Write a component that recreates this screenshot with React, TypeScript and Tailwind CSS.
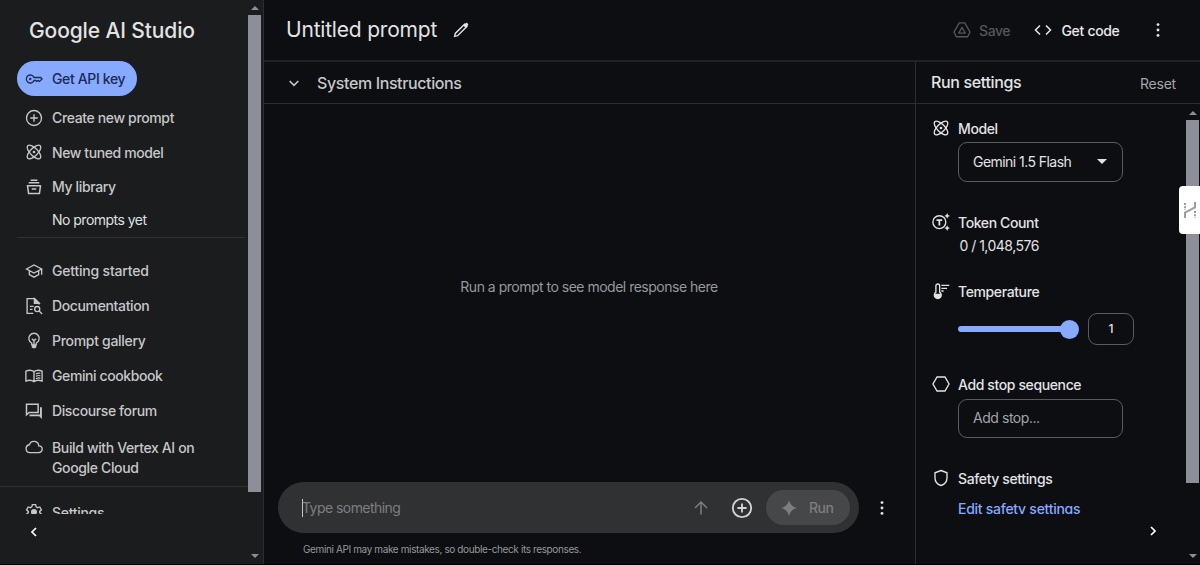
import type { ReactNode } from 'react';
import clsx from 'clsx';

type IconProps = { className?: string; strokeWidth?: number; children?: ReactNode };

function Icon({ className = 'size-[18px]', strokeWidth = 1.8, children }: IconProps) {
  return (
    <svg
      viewBox="0 0 24 24"
      className={clsx('shrink-0', className)}
      fill="none"
      stroke="currentColor"
      strokeWidth={strokeWidth}
    >
      {children}
    </svg>
  );
}

const KeyIcon = () => (
  <Icon strokeWidth={1.7}>
    <path d="M12 10a5.3 5.3 0 1 0 0 4h2.2l1.4 1.2 1.8-1.2 1.8 1.2 3.6-3.2-1.9-2z" />
    <circle cx="7" cy="12" r="1.6" fill="currentColor" stroke="none" />
  </Icon>
);

const PlusCircleIcon = ({ className, strokeWidth }: IconProps) => (
  <Icon className={className} strokeWidth={strokeWidth}>
    <circle cx="12" cy="12" r="10" />
    <path d="M12 7v10M7 12h10" />
  </Icon>
);

const ModelIcon = () => (
  <Icon>
    <ellipse cx="12" cy="12" rx="11.8" ry="5" transform="rotate(45 12 12)" />
    <ellipse cx="12" cy="12" rx="11.8" ry="5" transform="rotate(-45 12 12)" />
    <circle cx="12" cy="12" r="1.8" fill="currentColor" stroke="none" />
  </Icon>
);

const LibraryIcon = () => (
  <Icon strokeWidth={2}>
    <path d="M7.5 3h9M5 6.4h14M3.3 10.2h17.4l-1.5 10.6H4.8zM9 14.5h6" strokeLinejoin="round" />
  </Icon>
);

const SchoolIcon = () => (
  <Icon>
    <path d="M2 9.3 12 4l10.2 5.3L12 14.8zM5.8 11.6v5.2L12 20.2l6.2-3.4v-5.2M22.2 9.3v7.8" />
  </Icon>
);

const DocSearchIcon = () => (
  <Icon>
    <path d="M11 21.8H2.8V2.2h10l6 6V10M6.5 12.5h5M6.5 16.5H10" />
    <path d="M12.5 2.2v6.2h6.3z" fill="currentColor" />
    <circle cx="16.3" cy="16" r="3.4" />
    <path d="m18.8 18.6 4 4" />
  </Icon>
);

const BulbIcon = () => (
  <Icon>
    <path d="M9 17.2v-2.4a6.9 6.9 0 1 1 6 0v2.4zM9.2 9l2.8 2.8L14.8 9M12 11.8V17" />
    <path d="M9 17h6v4h-1.4a1.8 1.8 0 0 1-3.2 0H9z" fill="currentColor" stroke="none" />
    <path d="M9.5 20h5" />
  </Icon>
);

const BookIcon = () => (
  <Icon>
    <path d="M12 6.2C9 4 4.5 4 1.2 5.5v13.3c3.3-1.4 7.8-1.4 10.8.7 3-2.1 7.5-2.1 10.8-.7V5.5C19.5 4 15 4 12 6.2zM12 6.2v13.3" />
    <path d="M14.5 9.2q3-1.5 6-.8M14.5 12.4q3-1.5 6-.8M14.5 15.6q3-1.5 6-.8" strokeWidth="1.5" />
  </Icon>
);

const ForumIcon = () => (
  <Icon strokeWidth={2}>
    <path d="M2 3h15.500v11H5.500L2 17z" />
    <path d="M20 7h2.500v15.500L19 19H6v-2.500h14z" fill="currentColor" stroke="none" />
  </Icon>
);

const CloudIcon = () => (
  <Icon>
    <path d="M6.5 19.5a5.3 5.3 0 0 1-.7-10.5 6.4 6.4 0 0 1 12.5 1.5 4.500 4.500 0 0 1 .2 9z" />
  </Icon>
);

const SettingsIcon = () => (
  <Icon>
    <path d="M9.8 2.2h4.4l.7 3 1.8 1 3-.9 2.2 3.8-2.3 2.1v1.6l2.3 2.1-2.2 3.8-3-.9-1.8 1-.7 3H9.8l-.7-3-1.8-1-3 .9-2.2-3.8 2.3-2.1v-1.6L2.1 9.1l2.2-3.8 3 .9 1.800-1z" />
    <circle cx="12" cy="12" r="4" fill="currentColor" stroke="none" />
  </Icon>
);

const TokenIcon = () => (
  <Icon>
    <circle cx="9.8" cy="12.2" r="8.6" />
    <path d="M6 9.5h7.6M9.800 9.500v7" strokeWidth="2.4" />
    <path d="M16.5 0h8v8h-5.200z" fill="#0c0e12" stroke="none" />
    <path
      d="m20.2 0 1.200 2.700L24 3.900l-2.600 1.200-1.200 2.700L19 5.100l-2.600-1.200L19 2.700zM20.200 16.200l1.200 2.700 2.600 1.200-2.600 1.200-1.200 2.700-1.200-2.700-2.600-1.200 2.600-1.200z"
      fill="currentColor"
      stroke="none"
    />
  </Icon>
);

const ThermometerIcon = () => (
  <Icon>
    <path d="M5.2 13.5V5.200a2.500 2.500 0 0 1 5 0v8.300a4.600 4.600 0 1 1-5 0z" />
    <path d="M3 15.500h9.400v1.700a4.700 4.700 0 0 1-9.400 0z" fill="currentColor" stroke="none" />
    <path d="M12.500 4.500H23M12.500 8.500H20M12.500 12h3" />
  </Icon>
);

const HexagonIcon = () => (
  <Icon>
    <path d="M6.7 2.7h10.600L22.700 12l-5.400 9.300H6.700L1.300 12z" />
  </Icon>
);

const ShieldIcon = () => (
  <Icon>
    <path d="m12 2 8 3v6.500c0 5-3.300 9-8 10.500-4.700-1.500-8-5.500-8-10.500V5z" />
  </Icon>
);

const DriveIcon = () => (
  <Icon strokeWidth={1.7}>
    <path d="M8.3 2.500h7.400l7 12.300-3.200 6.200H4.500l-3.200-6.200z" strokeLinejoin="round" />
    <path d="m12 8.500 4.400 7.800H7.600z" strokeLinejoin="round" />
  </Icon>
);

function Dots({ className }: { className?: string }) {
  return (
    <svg viewBox="0 0 4 16" className={clsx('h-4 w-1 shrink-0', className)} fill="currentColor">
      <circle cx="2" cy="2.6" r="1.45" />
      <circle cx="2" cy="8" r="1.45" />
      <circle cx="2" cy="13.4" r="1.45" />
    </svg>
  );
}

function Triangle({ down }: { down?: boolean }) {
  return (
    <svg viewBox="0 0 8 4" className={clsx('h-1 w-2 shrink-0 fill-[#8d8f98]', down && 'rotate-180')}>
      <path d="M4 0 8 4H0z" />
    </svg>
  );
}

function NavItem({ icon, label, className }: { icon: ReactNode; label: ReactNode; className?: string }) {
  return (
    <a className={clsx('flex items-center gap-[9px] pl-[25px] text-[14px] font-medium', className)}>
      {icon}
      <span>{label}</span>
    </a>
  );
}

function Sidebar() {
  return (
    <aside className="flex w-[264px] shrink-0 border-r border-[#2b2d30] bg-[#1b1c1e] text-[#c6c7c9]">
      <div className="flex w-[248px] flex-col">
        <h1 className="mt-4 pl-[29px] text-[21px] leading-[30px] font-medium tracking-[-0.12px] text-[#e3e3e4]">
          Google AI Studio
        </h1>
        <button className="mt-[15px] ml-[17px] flex h-[35px] w-[120px] items-center gap-[9px] rounded-full bg-[#87a9ff] pl-2 text-[14px] font-medium text-[#1b2a52]">
          <KeyIcon />
          <span className="tracking-[-0.36px]">Get API key</span>
        </button>
        <nav className="mt-1 flex flex-col">
          <NavItem icon={<PlusCircleIcon />} label="Create new prompt" className="h-[35px] tracking-[-0.36px]" />
          <NavItem icon={<ModelIcon />} label="New tuned model" className="h-[34px] tracking-[-0.4px]" />
          <NavItem icon={<LibraryIcon />} label="My library" className="h-[35px] tracking-[-0.36px]" />
        </nav>
        <p className="mt-[6px] pl-[52px] text-[14px] leading-5 tracking-[-0.52px] text-[#dfe0e1]">No prompts yet</p>
        <div className="mt-[7px] mr-[3px] ml-[17px] h-px bg-[#2f3133]" />
        <nav className="mt-[15px] flex flex-col">
          <NavItem icon={<SchoolIcon />} label="Getting started" className="h-[35px] tracking-[-0.2px]" />
          <NavItem icon={<DocSearchIcon />} label="Documentation" className="h-[35px] tracking-[-0.36px]" />
          <NavItem icon={<BulbIcon />} label="Prompt gallery" className="h-[35px] tracking-[-0.3px]" />
          <NavItem icon={<BookIcon />} label="Gemini cookbook" className="h-[35px] tracking-[-0.4px]" />
          <NavItem icon={<ForumIcon />} label="Discourse forum" className="h-[35px] tracking-[-0.4px]" />
          <NavItem
            icon={<CloudIcon />}
            label={<>Build with Vertex AI on<br />Google Cloud</>}
            className="mt-[10px] items-start leading-[19.5px] tracking-[-0.36px]"
          />
        </nav>
        <div className="mt-[9px] h-px shrink-0 bg-[#2f3133]" />
        <div className="h-[27px] shrink-0 overflow-hidden pt-[15px]">
          <NavItem icon={<SettingsIcon />} label="Settings" className="h-5 tracking-[-0.3px]" />
        </div>
        <Icon className="mt-[10px] ml-[26px] size-4 text-white" strokeWidth={2.6}>
          <path d="M15 6 9 12l6 6" />
        </Icon>
      </div>
      <div className="flex w-[13px] flex-col items-center">
        <div className="flex h-[15px] items-center">
          <Triangle />
        </div>
        <div className="h-[477px] w-[13px] bg-[#8d8f98]" />
        <div className="mt-auto mb-[6px] flex">
          <Triangle down />
        </div>
      </div>
    </aside>
  );
}

function Header() {
  return (
    <header className="flex h-[62px] items-center border-b-2 border-[#202225] pr-10 pl-[22px]">
      <h2 className="text-[21px] leading-7 tracking-[-0.2px] text-[#e3e3e4]">Untitled prompt</h2>
      <Icon className="ml-[15px] size-[18px] text-[#e3e3e4]" strokeWidth={1.9}>
        <path d="m3.5 20.500.9-4L16.700 4.200l3.100 3.100L7.500 19.600z" />
        <path d="m15 6 3 3 3.500-3.500q.5-1-.3-1.800l-1-1q-.9-.7-1.700 0z" fill="currentColor" stroke="none" />
      </Icon>
      <div className="ml-auto flex items-center text-[14px] font-medium">
        <button className="flex items-center gap-[8px] text-[#55575a]">
          <DriveIcon />
          <span className="w-[31px] tracking-[-0.5px]">Save</span>
        </button>
        <button className="ml-6 flex items-center gap-[9px] text-[#e8e8e9]">
          <Icon strokeWidth={2}>
            <path d="m8 6-6 6 6 6M16 6l6 6-6 6" />
          </Icon>
          <span className="w-[59px] tracking-[-0.32px] whitespace-nowrap">Get code</span>
        </button>
        <Dots className="ml-[36px] text-[#e3e3e4]" />
      </div>
    </header>
  );
}

function PromptPane() {
  return (
    <main className="flex w-[652px] flex-col border-r border-[#2b2d30]">
      <div className="flex h-[42px] shrink-0 items-center border-b border-[#2b2d30] pl-[22px] text-[#c6c7c9]">
        <Icon className="size-4" strokeWidth={2.4}>
          <path d="m5.5 9 6.500 6.500L18.500 9" />
        </Icon>
        <span className="ml-[15px] text-[16px] font-medium tracking-[-0.38px]">System Instructions</span>
      </div>
      <div className="flex flex-1 items-center justify-center pr-px pb-[14px] text-[14px] text-[#96989b]">
        <span className="tracking-[-0.5px]">Run a prompt to see model response here</span>
      </div>
      <div className="flex items-center pl-[14px]">
        <div className="flex h-[51px] w-[581px] items-center rounded-full bg-[#303133] pr-[9px] pl-6">
          <div className="h-[18px] w-px bg-[#c6c7c9]" />
          <span className="-ml-px text-[14px] tracking-[-0.55px] text-[#7d7e80]">Type something</span>
          <Icon className="ml-auto size-[18px] text-[#7d7e80]" strokeWidth={2}>
            <path d="M12 20.500V4.500M4 12l8-8 8 8" />
          </Icon>
          <PlusCircleIcon className="ml-[21px] size-[22px] text-[#d3d4d5]" strokeWidth={2} />
          <button className="ml-[13px] flex h-[35px] w-[84px] items-center rounded-full bg-[#464749] pl-[14px] text-[14px] font-medium text-[#7d7e80]">
            <Icon>
              <path d="M12 1.500q2 8.500 10.500 10.500Q14 14 12 22.500 10 14 1.500 12 10 10 12 1.500z" fill="currentColor" stroke="none" />
            </Icon>
            <span className="ml-[11px] tracking-[-0.5px]">Run</span>
          </button>
        </div>
        <Dots className="ml-[21px] text-[#e3e3e4]" />
      </div>
      <p className="mt-2 mb-[7px] pl-[39px] text-[10px] leading-4 text-[#96989b]">
        <span className="tracking-[-0.38px]">Gemini API may make mistakes, so double-check its responses.</span>
      </p>
    </main>
  );
}

function SettingTitle({ icon, children }: { icon: ReactNode; children: ReactNode }) {
  return (
    <h4 className="flex h-5 items-center gap-[8.5px] text-[14px] font-medium tracking-[-0.38px]">
      {icon}
      {children}
    </h4>
  );
}

function RunSettings() {
  return (
    <aside className="relative flex flex-1 flex-col text-[#e3e3e4]">
      <div className="flex h-[42px] shrink-0 items-center justify-between border-b border-[#2b2d30] pr-6 pl-[15px]">
        <h3 className="-mt-px text-[16px] font-medium tracking-[-0.36px]">Run settings</h3>
        <button className="mt-[2px] text-[14px] tracking-[-0.2px] text-[#a3a5a8]">Reset</button>
      </div>
      <div className="flex flex-1">
        <div className="flex flex-1 flex-col">
          <div className="flex h-[410px] flex-col overflow-hidden pt-[14px] pl-[15.5px]">
            <SettingTitle icon={<ModelIcon />}>Model</SettingTitle>
            <button className="mt-1 ml-[26.5px] flex h-[40px] w-[165px] shrink-0 items-center justify-between rounded-[9px] border border-[#595b5e] pr-[15px] pb-px pl-[14px] text-[14px]">
              <span className="tracking-[-0.55px]">Gemini 1.5 Flash</span>
              <svg viewBox="0 0 10 5" className="h-[5px] w-[10px] fill-current">
                <path d="M0 0h10L5 5z" />
              </svg>
            </button>
            <div className="mt-[30px]">
              <SettingTitle icon={<TokenIcon />}>Token Count</SettingTitle>
              <p className="mt-1 pl-[28px] text-[14px] leading-5 tracking-[-0.52px]">0 / 1,048,576</p>
            </div>
            <div className="mt-[25px]">
              <SettingTitle icon={<ThermometerIcon />}>Temperature</SettingTitle>
            </div>
            <div className="mt-[12px] ml-[26.5px] flex items-center">
              <div className="h-[6px] w-[103px] rounded-l-full bg-[#87a9ff]" />
              <div className="-ml-px size-[19px] rounded-full bg-[#87a9ff]" />
              <div className="ml-[9px] flex h-8 w-[46px] items-center justify-center rounded-[9px] border border-[#595b5e] text-[12px] font-medium">
                1
              </div>
            </div>
            <div className="mt-[29px]">
              <SettingTitle icon={<HexagonIcon />}>Add stop sequence</SettingTitle>
              <div className="mt-[5px] ml-[26.5px] flex h-[39px] w-[165px] items-center rounded-[9px] border border-[#595b5e] pb-[2px] pl-[14px] text-[14px] tracking-[-0.45px] text-[#a3a5a8]">
                Add stop...
              </div>
            </div>
            <div className="mt-[30px]">
              <SettingTitle icon={<ShieldIcon />}>Safety settings</SettingTitle>
            </div>
            <a className="mt-[11px] h-5 shrink-0 pl-[26.5px] text-[14px] leading-5 font-medium tracking-[-0.27px] text-[#87a9ff]">
              Edit safety settings
            </a>
          </div>
          <Icon className="mt-[9px] ml-[229px] size-4 text-white" strokeWidth={2.6}>
            <path d="m9 6 6 6-6 6" />
          </Icon>
        </div>
        <div className="mr-px flex w-[13px] flex-col items-center">
          <div className="flex h-[16px] items-center pt-px">
            <Triangle />
          </div>
          <div className="h-[363px] w-[13px] bg-[#8d8f98]" />
          <div className="mt-auto mb-[6px] flex">
            <Triangle down />
          </div>
        </div>
      </div>
      {/* floating extension tab on the window edge */}
      <div className="absolute top-[124px] right-0 flex h-[48px] w-[21px] items-center justify-center rounded-l-[4px] bg-white">
        <svg viewBox="0 0 14 18" className="h-[18px] w-[14px]" fill="none" stroke="#9a9da6" strokeWidth="2">
          <path d="M2 17v-5.500l10-5V1" />
          <path d="M2 2v7M12 10v7" strokeDasharray="2 1.2" />
        </svg>
      </div>
    </aside>
  );
}

export default function App() {
  return (
    <div className="flex h-[565px] w-[1200px] overflow-hidden border-b border-black bg-[#0c0e12] font-[Inter,'Liberation_Sans',sans-serif]">
      <Sidebar />
      <div className="flex flex-1 flex-col">
        <Header />
        <div className="flex flex-1">
          <PromptPane />
          <RunSettings />
        </div>
      </div>
    </div>
  );
}
